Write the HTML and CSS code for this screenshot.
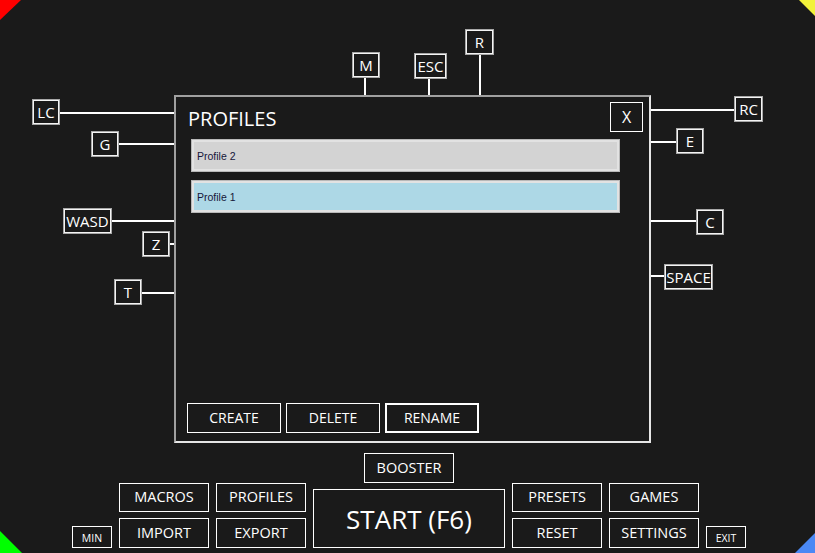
FILE: index.html
```html
<!DOCTYPE html>
<html lang="en">
<head>
<meta charset="utf-8">
<title>Profiles</title>
<link rel="stylesheet" href="styles.css">
</head>
<body>
<div class="app">
  <div class="corner corner-tl"></div>
  <div class="corner corner-tr"></div>
  <div class="corner corner-bl"></div>
  <div class="corner corner-br"></div>

  <svg class="wires" width="815" height="553" viewBox="0 0 815 553" aria-hidden="true">
    <g stroke="#ffffff" stroke-width="2" fill="none">
      <line x1="59" y1="113" x2="174" y2="113"/>
      <line x1="118" y1="144" x2="174" y2="144"/>
      <line x1="111" y1="221" x2="174" y2="221"/>
      <line x1="169" y1="244" x2="174" y2="244"/>
      <line x1="141" y1="293" x2="174" y2="293"/>
      <line x1="365" y1="77" x2="365" y2="95"/>
      <line x1="429" y1="78" x2="429" y2="95"/>
      <line x1="480" y1="54" x2="480" y2="95"/>
      <line x1="651" y1="110" x2="735" y2="110"/>
      <line x1="651" y1="142" x2="677" y2="142"/>
      <line x1="651" y1="221" x2="697" y2="221"/>
      <line x1="651" y1="276" x2="665" y2="276"/>
    </g>
  </svg>

  <div class="key key-lc">LC</div>
  <div class="key key-g">G</div>
  <div class="key key-wasd">WASD</div>
  <div class="key key-z">Z</div>
  <div class="key key-t">T</div>
  <div class="key key-m">M</div>
  <div class="key key-esc">ESC</div>
  <div class="key key-r">R</div>
  <div class="key key-rc">RC</div>
  <div class="key key-e">E</div>
  <div class="key key-c">C</div>
  <div class="key key-space">SPACE</div>

  <section class="dialog">
    <div class="dialog-head">
      <h1 class="dialog-title">PROFILES</h1>
      <button class="close">X</button>
    </div>
    <div class="profile-list">
      <div class="profile">Profile 2</div>
      <div class="profile profile-selected">Profile 1</div>
    </div>
    <div class="dialog-actions">
      <button class="dlg-btn">CREATE</button>
      <button class="dlg-btn">DELETE</button>
      <button class="dlg-btn dlg-btn-focused">RENAME</button>
    </div>
  </section>

  <footer class="toolbar">
    <button class="tb booster">BOOSTER</button>
    <button class="tb macros">MACROS</button>
    <button class="tb profiles">PROFILES</button>
    <button class="tb start">START (F6)</button>
    <button class="tb presets">PRESETS</button>
    <button class="tb games">GAMES</button>
    <button class="tb small min">MIN</button>
    <button class="tb import">IMPORT</button>
    <button class="tb export">EXPORT</button>
    <button class="tb reset">RESET</button>
    <button class="tb settings">SETTINGS</button>
    <button class="tb small exit">EXIT</button>
  </footer>
</div>
</body>
</html>
```

FILE: styles.css
```css
html, body {
  margin: 0;
  padding: 0;
  background: #1a1a1a;
}

.app {
  position: relative;
  width: 815px;
  height: 553px;
  overflow: hidden;
  box-sizing: border-box;
  background: #1a1a1a;
  display: flex;
  flex-direction: column;
  justify-content: flex-end;
  padding: 0 0 5px 72px;
  font-family: "Open Sans", "Noto Sans", sans-serif;
  color: #ffffff;
}

button {
  font-family: inherit;
  color: #ffffff;
  background: transparent;
  margin: 0;
  padding: 0;
  cursor: pointer;
}

/* corner markers */
.corner {
  position: absolute;
}
.corner-tl {
  left: 0;
  top: 0;
  width: 21px;
  height: 20px;
  background: #ff0000;
  clip-path: polygon(0 0, 100% 0, 0 100%);
}
.corner-tr {
  right: 0;
  top: 0;
  width: 16px;
  height: 16px;
  background: #f2f23a;
  clip-path: polygon(0 0, 100% 0, 100% 100%);
}
.corner-bl {
  left: 0;
  bottom: 0;
  width: 22px;
  height: 22px;
  background: #00ff00;
  clip-path: polygon(0 0, 100% 100%, 0 100%);
}
.corner-br {
  right: 0;
  bottom: 0;
  width: 20px;
  height: 20px;
  background: #4a88f5;
  clip-path: polygon(100% 0, 100% 100%, 0 100%);
}

/* diagram wires and key nodes */
.wires {
  position: absolute;
  left: 0;
  top: 0;
}

.key {
  position: absolute;
  height: 26px;
  width: 28px;
  box-sizing: border-box;
  border: 1px solid #a8a8a8;
  box-shadow: inset 0 0 0 1px #f4f4f4;
  background: #1a1a1a;
  display: flex;
  align-items: center;
  justify-content: center;
  font-size: 15px;
  line-height: 1;
}
.key-lc { left: 32px; top: 99px; }
.key-g { left: 91px; top: 131px; }
.key-wasd { left: 63px; top: 208px; width: 49px; }
.key-z { left: 142px; top: 231px; }
.key-t { left: 114px; top: 279px; }
.key-m { left: 352px; top: 52px; }
.key-esc { left: 414px; top: 53px; width: 33px; }
.key-r { left: 465px; top: 29px; width: 29px; }
.key-rc { left: 734px; top: 96px; width: 29px; }
.key-e { left: 676px; top: 128px; }
.key-c { left: 696px; top: 209px; }
.key-space { left: 664px; top: 264px; width: 49px; }

/* profiles dialog */
.dialog {
  position: absolute;
  left: 174px;
  top: 95px;
  width: 477px;
  height: 348px;
  box-sizing: border-box;
  border: 2px solid;
  border-color: #a0a0a0 #e6e6e6 #e6e6e6 #a0a0a0;
  background: #1a1a1a;
  display: flex;
  flex-direction: column;
}

.dialog-head {
  display: flex;
  justify-content: space-between;
  align-items: center;
  height: 30px;
  padding: 5px 6px 0 12px;
}

.dialog-title {
  margin: 0;
  font-size: 20px;
  font-weight: 400;
  line-height: 1;
  padding-top: 3px;
}

.close {
  width: 33px;
  height: 30px;
  box-sizing: border-box;
  border: 1px solid #ffffff;
  font-size: 16px;
  line-height: 1;
  display: flex;
  align-items: center;
  justify-content: center;
}

.profile-list {
  display: flex;
  flex-direction: column;
  gap: 8px;
  width: 429px;
  margin: 7px 0 0 15px;
}

.profile {
  box-sizing: border-box;
  border: 2px solid #e2e2e2;
  box-shadow: 0 0 0 1px #b8b8b8;
  margin: 1px;
  height: 31px;
  background: #d3d3d3;
  color: #16163a;
  font-family: "Liberation Sans", Arial, sans-serif;
  font-size: 10.5px;
  padding-left: 3px;
  display: flex;
  align-items: center;
}

.profile-selected {
  background: #add8e6;
}

.dialog-actions {
  margin-top: auto;
  display: flex;
  gap: 5px;
  padding: 0 0 8px 11px;
}

.dlg-btn {
  width: 94px;
  height: 30px;
  box-sizing: border-box;
  border: 1px solid #ffffff;
  font-size: 14px;
  line-height: 1;
  display: flex;
  align-items: center;
  justify-content: center;
}

.dlg-btn-focused {
  border-width: 2px;
}

/* bottom toolbar */
.toolbar {
  display: grid;
  grid-template-columns: 40px 90px 90px 192px 90px 90px 40px;
  grid-template-rows: 30px 29px 36px;
  column-gap: 7px;
  width: max-content;
}

.tb {
  box-sizing: border-box;
  border: 1px solid #ffffff;
  font-size: 14.5px;
  line-height: 1;
  display: flex;
  align-items: center;
  justify-content: center;
}

.booster { grid-column: 4; grid-row: 1; width: 90px; justify-self: center; }
.macros { grid-column: 2; grid-row: 2; }
.profiles { grid-column: 3; grid-row: 2; }
.presets { grid-column: 5; grid-row: 2; }
.games { grid-column: 6; grid-row: 2; }

.import,
.export,
.reset,
.settings {
  grid-row: 3;
  align-self: end;
  height: 30px;
}
.import { grid-column: 2; }
.export { grid-column: 3; }
.reset { grid-column: 5; }
.settings { grid-column: 6; }

.start {
  grid-column: 4;
  grid-row: 2 / 4;
  align-self: end;
  height: 59px;
  font-size: 26px;
}

.small {
  grid-row: 3;
  align-self: end;
  height: 22px;
  font-size: 10.5px;
  padding-top: 2px;
}
.min { grid-column: 1; }
.exit { grid-column: 7; }
```
